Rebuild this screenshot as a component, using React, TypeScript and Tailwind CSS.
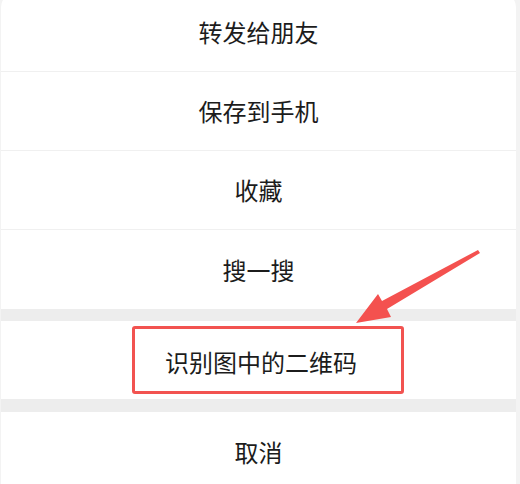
import React from 'react';

const topItems = ['转发给朋友', '保存到手机', '收藏', '搜一搜'];

const font = { fontFamily: '"Noto Sans CJK SC", "Noto Sans", sans-serif' };

export default function App() {
  return (
    <div
      className="relative w-[520px] h-[484px] overflow-hidden bg-[#f3f3f3]"
      style={font}
    >
      <div className="ml-[1px] mr-[4px] -mt-[7px] rounded-t-[14px] bg-[#ededed] overflow-hidden">
        <div className="bg-white">
          {topItems.map((t, i) => (
            <div
              key={t}
              className={
                'h-[79px] flex items-center justify-center text-[24px] text-[#1c1c1c] ' +
                (i < topItems.length - 1 ? 'border-b border-[#f0f0f0]' : '')
              }
            >
              {t}
            </div>
          ))}
        </div>
        <div className="h-[12px]" />
        <div className="h-[78px] bg-white flex items-center">
          <div className="ml-[131px] w-[272px] h-[68px] border-[3px] border-[#f25350] rounded-[3px] flex items-center pl-[30px] text-[24px] text-[#1c1c1c] pt-[4px]">
            识别图中的二维码
          </div>
        </div>
        <div className="h-[13px]" />
        <div className="h-[79px] bg-white flex items-center justify-center text-[24px] text-[#1c1c1c]">
          取消
        </div>
      </div>

      <svg
        className="absolute left-0 top-0 pointer-events-none"
        width="520"
        height="484"
        viewBox="0 0 520 484"
      >
        <polygon
          points="478,250 480,253 387,309 391,317 356,323 378,294 382,301"
          fill="#f4514f"
        />
      </svg>
    </div>
  );
}
